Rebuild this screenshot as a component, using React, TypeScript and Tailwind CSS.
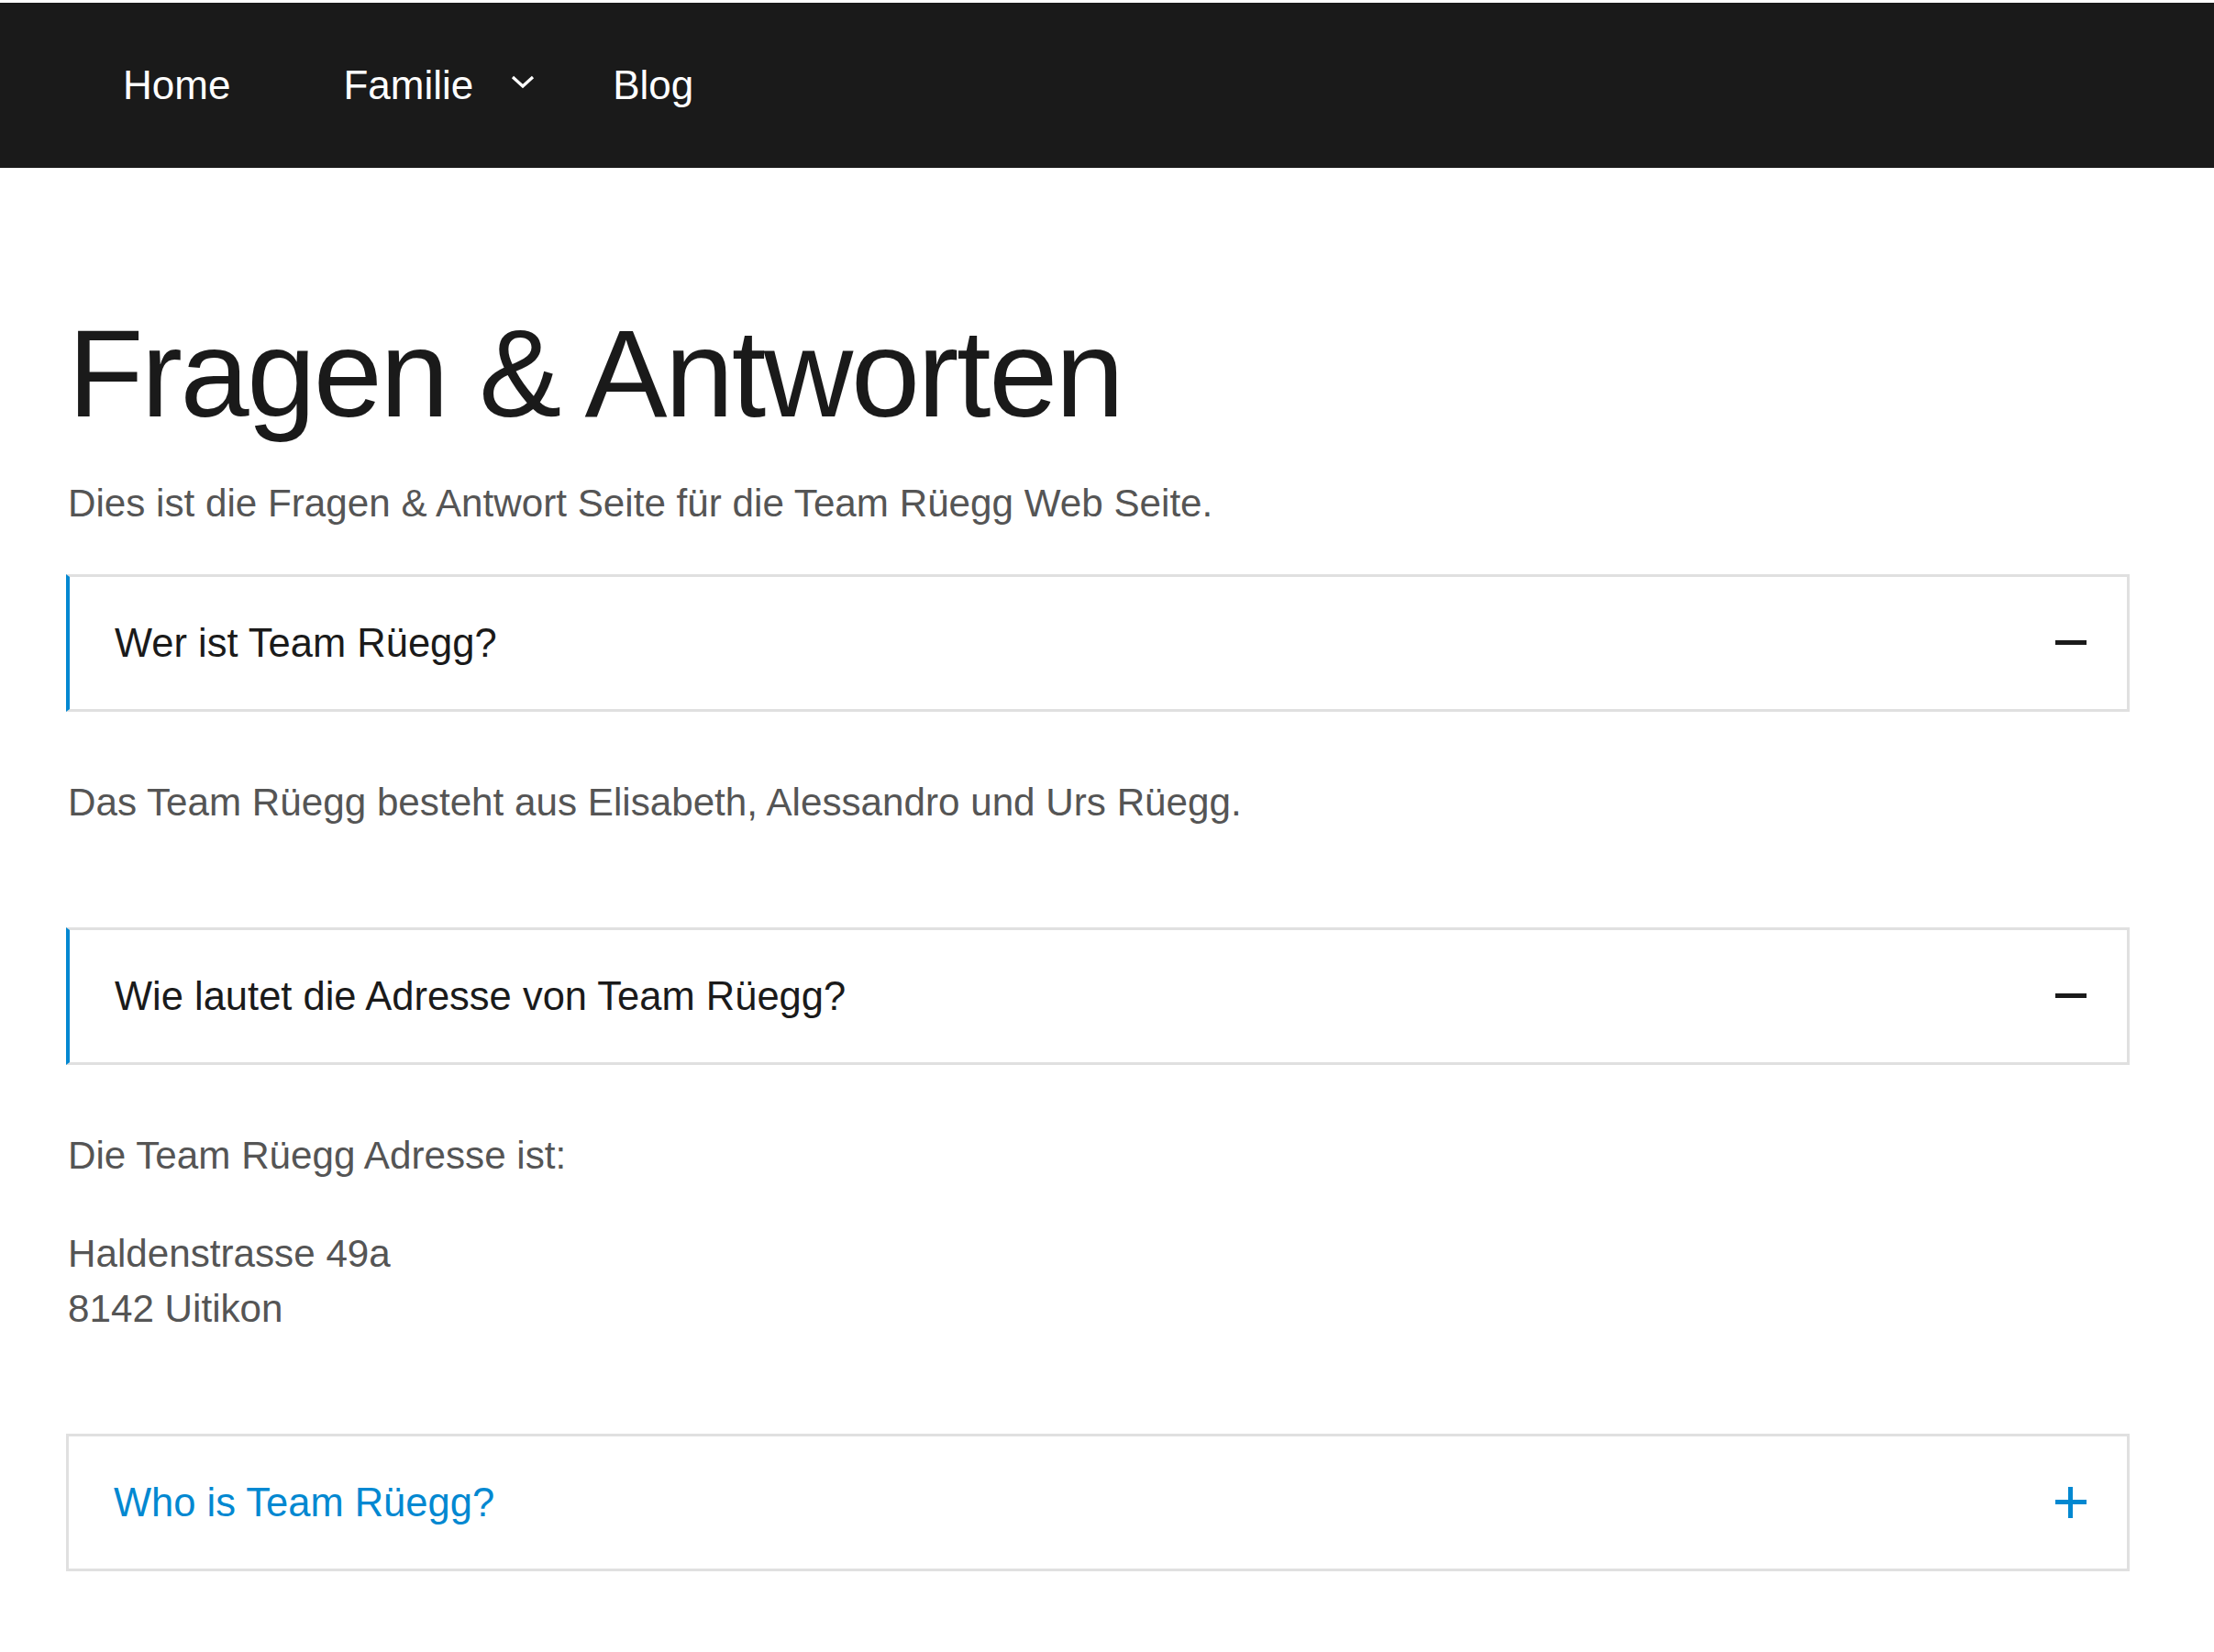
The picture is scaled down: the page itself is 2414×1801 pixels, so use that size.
import { useState } from "react";

const font = { fontFamily: '"Liberation Sans", Arial, sans-serif' };

interface FaqItem {
  question: string;
  answer: string[][];
}

const faqs: FaqItem[] = [
  {
    question: "Wer ist Team Rüegg?",
    answer: [["Das Team Rüegg besteht aus Elisabeth, Alessandro und Urs Rüegg."]],
  },
  {
    question: "Wie lautet die Adresse von Team Rüegg?",
    answer: [["Die Team Rüegg Adresse ist:"], ["Haldenstrasse 49a", "8142 Uitikon"]],
  },
  {
    question: "Who is Team Rüegg?",
    answer: [["Team Rüegg consists of Elisabeth, Alessandro and Urs Rüegg."]],
  },
];

function Chevron() {
  return (
    <svg width="26" height="16" viewBox="0 0 26 16" className="ml-[41px] mt-[-8px]">
      <polyline points="2,3 13,13 24,3" fill="none" stroke="#ffffff" strokeWidth="3.2" />
    </svg>
  );
}

function ToggleIcon({ open }: { open: boolean }) {
  return (
    <div className="relative w-[34px] h-[34px] shrink-0">
      <div className={`absolute left-0 top-[14px] w-[34px] h-[5px] ${open ? "bg-[#1a1a1a]" : "bg-[#0288d1]"}`} />
      {!open && <div className="absolute left-[14px] top-0 w-[5px] h-[34px] bg-[#0288d1]" />}
    </div>
  );
}

export default function App() {
  const [open, setOpen] = useState<boolean[]>([true, true, false]);

  const toggle = (i: number) => {
    setOpen((prev) => prev.map((v, idx) => (idx === i ? !v : v)));
  };

  return (
    <div className="min-h-screen bg-white pt-[3px]" style={font}>
      {/* Navigation */}
      <nav className="h-[180px] bg-[#1a1a1a] flex items-center text-white text-[44px] leading-[44px]">
        <a className="ml-[134px]">Home</a>
        <a className="ml-[123px]">Familie</a>
        <Chevron />
        <a className="ml-[85px]">Blog</a>
      </nav>

      <main className="pl-[72px] pr-[92px]">
        <h1 className="mt-[151px] text-[135px] leading-[1.1] tracking-[-0.018em] text-[#1a1a1a] ml-[2px]">
          Fragen &amp; Antworten
        </h1>
        <p className="mt-[37px] text-[42.2px] leading-[58px] text-[#555555] ml-[2px]">
          Dies ist die Fragen &amp; Antwort Seite für die Team Rüegg Web Seite.
        </p>

        <div className="mt-[48px] flex flex-col">
          {faqs.map((item, i) => (
            <div key={item.question}>
              <button
                onClick={() => toggle(i)}
                className={`w-full h-[150px] flex items-center justify-between border-[3px] border-[#e0e0e0] bg-white pl-[49px] pr-[44px] text-left ${
                  open[i] ? "border-l-[4px] border-l-[#0288d1]" : ""
                }`}
              >
                <span className={`text-[43.5px] leading-[58px] ${open[i] ? "text-[#1a1a1a]" : "text-[#0288d1]"}`}>
                  {item.question}
                </span>
                <ToggleIcon open={open[i]} />
              </button>
              {open[i] && (
                <div className="pt-[69px] pb-[106px] flex flex-col gap-[47px] text-[42.2px] leading-[60px] text-[#555555] ml-[2px]">
                  {item.answer.map((para, j) => (
                    <p key={j}>
                      {para.map((line, k) => (
                        <span key={k} className="block">
                          {line}
                        </span>
                      ))}
                    </p>
                  ))}
                </div>
              )}
            </div>
          ))}
        </div>
      </main>
    </div>
  );
}
